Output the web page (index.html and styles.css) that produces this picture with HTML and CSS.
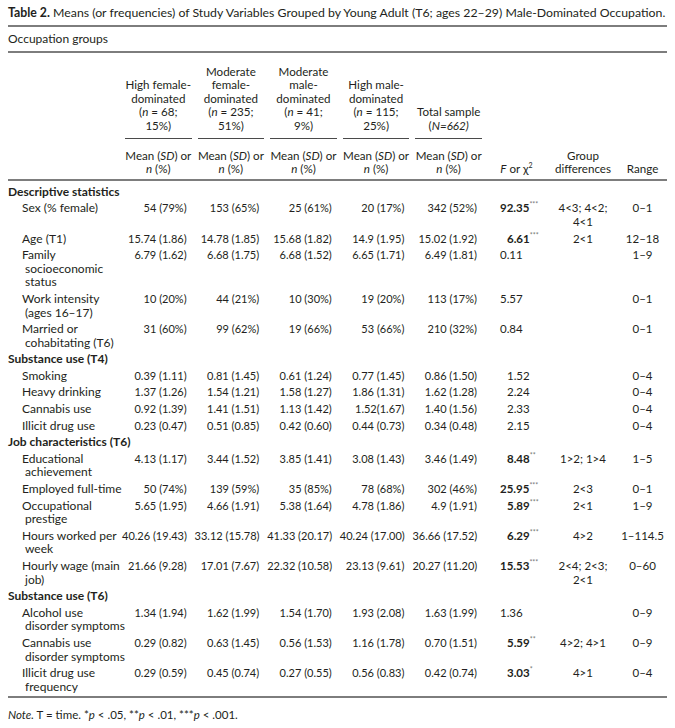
FILE: index.html
```html
<!DOCTYPE html>
<html lang="en">
<head>
    <meta charset="UTF-8">
    <meta name="viewport" content="width=device-width, initial-scale=1.0">
    <title>Table 2</title>
    <link rel="stylesheet" href="styles.css">
</head>
<body>
    <p class="caption"><b>Table 2.</b> Means (or frequencies) of Study Variables Grouped by Young Adult (T6; ages 22–29) Male-Dominated Occupation.</p>
    <table class="stats">
        <colgroup>
            <col class="c-lab">
            <col class="c-grp"><col class="c-grp"><col class="c-grp"><col class="c-grp"><col class="c-grp">
            <col class="c-f">
            <col class="c-diff">
            <col class="c-rng">
        </colgroup>
        <thead>
            <tr class="occ"><th colspan="9">Occupation groups</th></tr>
            <tr class="head-top">
                <th></th>
                <th><div class="ul">High female-<br>dominated<br>(<i>n</i> = 68;<br>15%)</div></th>
                <th><div class="ul">Moderate<br>female-<br>dominated<br>(<i>n</i> = 235;<br>51%)</div></th>
                <th><div class="ul">Moderate<br>male-<br>dominated<br>(<i>n</i> = 41;<br>9%)</div></th>
                <th><div class="ul">High male-<br>dominated<br>(<i>n</i> = 115;<br>25%)</div></th>
                <th><div class="ul">Total sample<br>(<i>N=662)</i></div></th>
                <th></th><th></th><th></th>
            </tr>
            <tr class="head-sub">
                <th></th>
                <th>Mean (<i>SD</i>) or<br><i>n</i> (%)</th>
                <th>Mean (<i>SD</i>) or<br><i>n</i> (%)</th>
                <th>Mean (<i>SD</i>) or<br><i>n</i> (%)</th>
                <th>Mean (<i>SD</i>) or<br><i>n</i> (%)</th>
                <th>Mean (<i>SD</i>) or<br><i>n</i> (%)</th>
                <th><i>F</i> or χ<sup class="sq">2</sup></th>
                <th>Group<br>differences</th>
                <th>Range</th>
            </tr>
        </thead>
        <tbody>
            <tr><td class="sec" colspan="9">Descriptive statistics</td></tr>
            <tr><td class="lab">Sex (% female)</td><td class="num">54 (79%)</td><td class="num">153 (65%)</td><td class="num">25 (61%)</td><td class="num">20 (17%)</td><td class="num">342 (52%)</td><td class="f"><b>92.35</b><sup>***</sup></td><td class="diff">4&lt;3; 4&lt;2;<br>4&lt;1</td><td class="rng">0–1</td></tr>
            <tr><td class="lab">Age (T1)</td><td class="num">15.74 (1.86)</td><td class="num">14.78 (1.85)</td><td class="num">15.68 (1.82)</td><td class="num">14.9 (1.95)</td><td class="num">15.02 (1.92)</td><td class="f in"><b>6.61</b><sup>***</sup></td><td class="diff">2&lt;1</td><td class="rng">12–18</td></tr>
            <tr><td class="lab">Family<br>socioeconomic<br>status</td><td class="num">6.79 (1.62)</td><td class="num">6.68 (1.75)</td><td class="num">6.68 (1.52)</td><td class="num">6.65 (1.71)</td><td class="num">6.49 (1.81)</td><td class="f">0.11</td><td class="diff"></td><td class="rng">1–9</td></tr>
            <tr><td class="lab">Work intensity<br>(ages 16–17)</td><td class="num">10 (20%)</td><td class="num">44 (21%)</td><td class="num">10 (30%)</td><td class="num">19 (20%)</td><td class="num">113 (17%)</td><td class="f">5.57</td><td class="diff"></td><td class="rng">0–1</td></tr>
            <tr><td class="lab">Married or<br>cohabitating (T6)</td><td class="num">31 (60%)</td><td class="num">99 (62%)</td><td class="num">19 (66%)</td><td class="num">53 (66%)</td><td class="num">210 (32%)</td><td class="f">0.84</td><td class="diff"></td><td class="rng">0–1</td></tr>

            <tr><td class="sec" colspan="9">Substance use (T4)</td></tr>
            <tr><td class="lab">Smoking</td><td class="num">0.39 (1.11)</td><td class="num">0.81 (1.45)</td><td class="num">0.61 (1.24)</td><td class="num">0.77 (1.45)</td><td class="num">0.86 (1.50)</td><td class="f in">1.52</td><td class="diff"></td><td class="rng">0–4</td></tr>
            <tr><td class="lab">Heavy drinking</td><td class="num">1.37 (1.26)</td><td class="num">1.54 (1.21)</td><td class="num">1.58 (1.27)</td><td class="num">1.86 (1.31)</td><td class="num">1.62 (1.28)</td><td class="f in">2.24</td><td class="diff"></td><td class="rng">0–4</td></tr>
            <tr><td class="lab">Cannabis use</td><td class="num">0.92 (1.39)</td><td class="num">1.41 (1.51)</td><td class="num">1.13 (1.42)</td><td class="num">1.52(1.67)</td><td class="num">1.40 (1.56)</td><td class="f in">2.33</td><td class="diff"></td><td class="rng">0–4</td></tr>
            <tr><td class="lab">Illicit drug use</td><td class="num">0.23 (0.47)</td><td class="num">0.51 (0.85)</td><td class="num">0.42 (0.60)</td><td class="num">0.44 (0.73)</td><td class="num">0.34 (0.48)</td><td class="f in">2.15</td><td class="diff"></td><td class="rng">0–4</td></tr>

            <tr><td class="sec" colspan="9">Job characteristics (T6)</td></tr>
            <tr><td class="lab">Educational<br>achievement</td><td class="num">4.13 (1.17)</td><td class="num">3.44 (1.52)</td><td class="num">3.85 (1.41)</td><td class="num">3.08 (1.43)</td><td class="num">3.46 (1.49)</td><td class="f in"><b>8.48</b><sup>**</sup></td><td class="diff">1&gt;2; 1&gt;4</td><td class="rng">1–5</td></tr>
            <tr><td class="lab">Employed full-time</td><td class="num">50 (74%)</td><td class="num">139 (59%)</td><td class="num">35 (85%)</td><td class="num">78 (68%)</td><td class="num">302 (46%)</td><td class="f"><b>25.95</b><sup>***</sup></td><td class="diff">2&lt;3</td><td class="rng">0–1</td></tr>
            <tr><td class="lab">Occupational<br>prestige</td><td class="num">5.65 (1.95)</td><td class="num">4.66 (1.91)</td><td class="num">5.38 (1.64)</td><td class="num">4.78 (1.86)</td><td class="num">4.9 (1.91)</td><td class="f in"><b>5.89</b><sup>***</sup></td><td class="diff">2&lt;1</td><td class="rng">1–9</td></tr>
            <tr><td class="lab">Hours worked per<br>week</td><td class="num">40.26 (19.43)</td><td class="num">33.12 (15.78)</td><td class="num">41.33 (20.17)</td><td class="num">40.24 (17.00)</td><td class="num">36.66 (17.52)</td><td class="f in"><b>6.29</b><sup>***</sup></td><td class="diff">4&gt;2</td><td class="rng">1–114.5</td></tr>
            <tr><td class="lab">Hourly wage (main<br>job)</td><td class="num">21.66 (9.28)</td><td class="num">17.01 (7.67)</td><td class="num">22.32 (10.58)</td><td class="num">23.13 (9.61)</td><td class="num">20.27 (11.20)</td><td class="f"><b>15.53</b><sup>***</sup></td><td class="diff">2&lt;4; 2&lt;3;<br>2&lt;1</td><td class="rng">0–60</td></tr>

            <tr><td class="sec" colspan="9">Substance use (T6)</td></tr>
            <tr><td class="lab">Alcohol use<br>disorder symptoms</td><td class="num">1.34 (1.94)</td><td class="num">1.62 (1.99)</td><td class="num">1.54 (1.70)</td><td class="num">1.93 (2.08)</td><td class="num">1.63 (1.99)</td><td class="f">1.36</td><td class="diff"></td><td class="rng">0–9</td></tr>
            <tr><td class="lab">Cannabis use<br>disorder symptoms</td><td class="num">0.29 (0.82)</td><td class="num">0.63 (1.45)</td><td class="num">0.56 (1.53)</td><td class="num">1.16 (1.78)</td><td class="num">0.70 (1.51)</td><td class="f in"><b>5.59</b><sup>**</sup></td><td class="diff">4&gt;2; 4&gt;1</td><td class="rng">0–9</td></tr>
            <tr class="last"><td class="lab">Illicit drug use<br>frequency</td><td class="num">0.29 (0.59)</td><td class="num">0.45 (0.74)</td><td class="num">0.27 (0.55)</td><td class="num">0.56 (0.83)</td><td class="num">0.42 (0.74)</td><td class="f in"><b>3.03</b><sup>*</sup></td><td class="diff">4&gt;1</td><td class="rng">0–4</td></tr>
        </tbody>
    </table>
    <p class="note"><i>Note.</i> T = time. *<i>p</i> &lt; .05, **<i>p</i> &lt; .01, ***<i>p</i> &lt; .001.</p>
</body>
</html>
```

FILE: styles.css
```css
body {
    margin: 0;
    padding: 6px 8px 0;
    background: #fff;
    color: #231f20;
    font-family: Lato, "Liberation Sans", sans-serif;
    font-size: 12px;
    line-height: 13.6px;
}
.caption {
    margin: 0;
    padding-bottom: 5px;
    border-bottom: 2px solid #7d7d7d;
    font-size: 12.3px;
    line-height: 14px;
}
.stats {
    width: 659px;
    border-collapse: collapse;
    table-layout: fixed;
}
.c-lab { width: 114px; }
.c-grp { width: 72.6px; }
.c-f { width: 63px; }
.c-diff { width: 70px; }
.c-rng { width: 49px; }

.stats th {
    padding: 0;
    font-weight: normal;
    text-align: center;
    vertical-align: bottom;
    white-space: nowrap;
}
.occ th {
    padding: 5px 0;
    text-align: left;
    font-size: 12px;
    border-bottom: 2px solid #7d7d7d;
}
.head-top th,
.head-sub th {
    font-size: 11.6px;
}
.head-top th {
    padding-top: 12px;
}
.ul {
    margin: 0 3px;
    padding-bottom: 5px;
    border-bottom: 1px solid #4a4a4a;
}
.head-sub th {
    padding: 10px 0 3px;
    border-bottom: 2px solid #7d7d7d;
}
.stats td {
    padding: 1.5px 0;
    vertical-align: top;
    white-space: nowrap;
}
.stats tbody tr:first-child td {
    padding-top: 4px;
}
.stats tr.last td {
    padding-bottom: 3px;
    border-bottom: 2px solid #7d7d7d;
}
.sec {
    font-weight: bold;
}
.lab {
    padding-left: 17px !important;
    text-indent: -3px;
}
.num {
    text-align: right;
    padding-right: 8px !important;
    font-size: 11px;
}
.f {
    padding-left: 15px !important;
    font-size: 11.5px;
}
.f.in {
    padding-left: 22px !important;
}
.diff, .rng {
    text-align: center;
    font-size: 11.5px;
}
sup {
    font-size: 7px;
    line-height: 0;
    vertical-align: 5px;
    color: #777;
}
.sq {
    color: inherit;
}
.note {
    margin: 10px 0 0;
    font-size: 11.5px;
}
```
